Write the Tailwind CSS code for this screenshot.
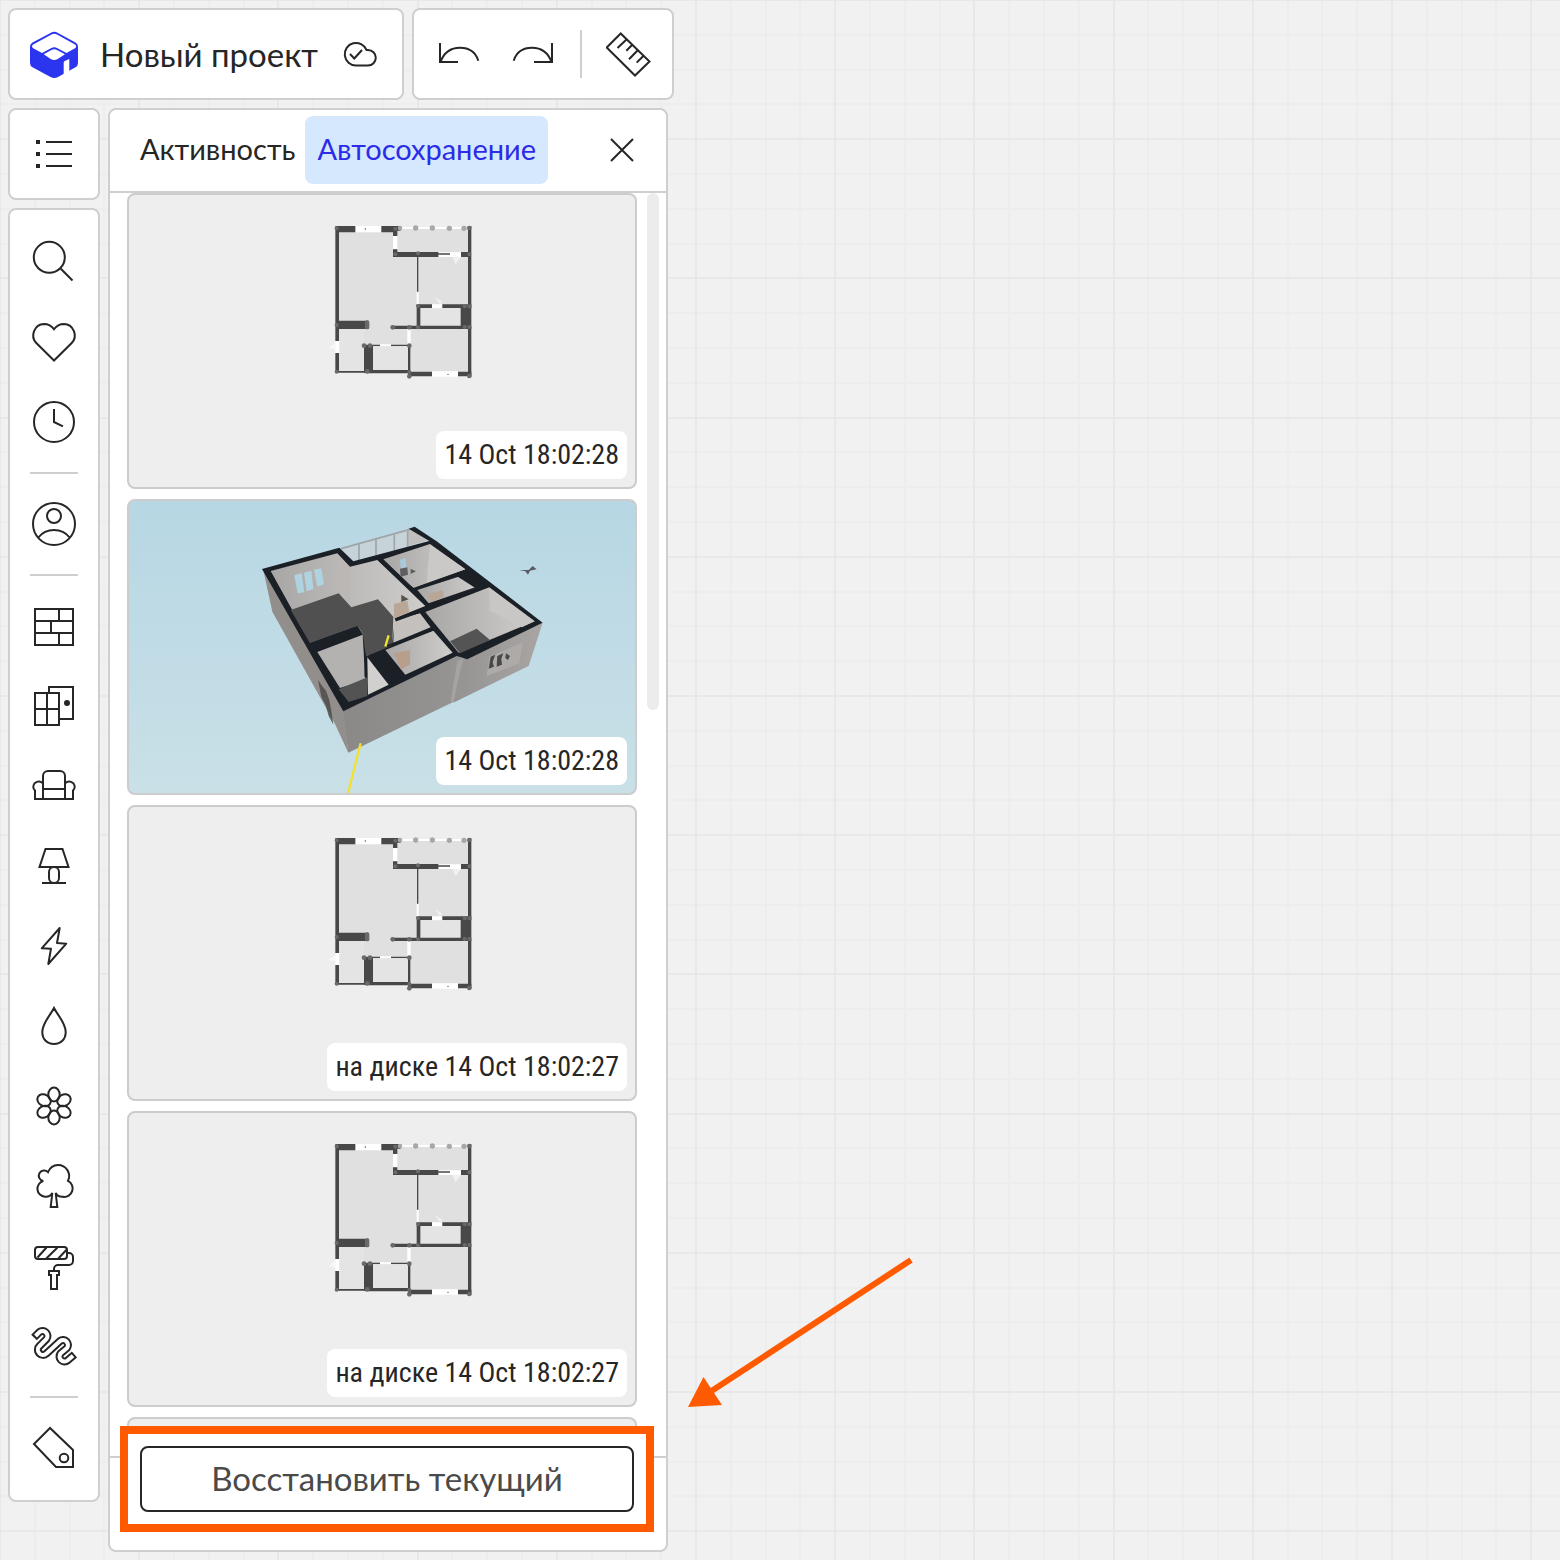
<!DOCTYPE html>
<html lang="ru">
<head>
    <meta charset="UTF-8">
    <meta name="viewport" content="width=device-width, initial-scale=1.0">
    <title>Новый проект</title>
    <script src="https://cdn.jsdelivr.net/npm/@tailwindcss/browser@4"></script>
</head>
<body class="bg-[#f1f1f1] font-['Lato','Open_Sans',sans-serif] text-[#262626] antialiased">
    <!-- Canvas grid -->
    <svg class="fixed inset-0 w-full h-full" aria-hidden="true">
        <defs>
            <pattern id="grid" width="696" height="696" patternUnits="userSpaceOnUse">
                <path stroke="#ededed" stroke-width="2" d="M35 0V696M70 0V696M104 0V696M174 0V696M209 0V696M244 0V696M313 0V696M348 0V696M383 0V696M452 0V696M487 0V696M522 0V696M592 0V696M626 0V696M661 0V696M0 35H696M0 70H696M0 104H696M0 174H696M0 209H696M0 244H696M0 313H696M0 348H696M0 383H696M0 452H696M0 487H696M0 522H696M0 592H696M0 626H696M0 661H696"/>
                <path stroke="#e8e8e8" stroke-width="2" d="M0 0V696M139 0V696M278 0V696M418 0V696M557 0V696M696 0V696M0 0H696M0 139H696M0 278H696M0 418H696M0 557H696M0 696H696"/>
            </pattern>
        </defs>
        <rect width="100%" height="100%" fill="url(#grid)"/>
    </svg>

    <!-- Shared floor plan drawing -->
    <svg class="hidden" aria-hidden="true">
        <symbol id="plan" viewBox="0 0 540 600">
            <path fill="#e0e0e0" d="M80 112H480V548H80z"/>
            <path fill="#e4e4e4" d="M332 355H452V408H332zM190 470H294V540H190zM88 418H162V543H88z"/>
            <g fill="#fff">
                <path d="M136 108H214V127H136zM249 138H262V178H249zM385 187H453V201H385zM272 111H470V117H272zM320 305H326V343H320zM366 343H397V355H366zM292 417H302V467H292zM76 453H88V489H76zM210 463H243V469H210zM366 544H444V560H366z"/>
                <path opacity=".5" d="M428 201h25l-16 22-4-8zM374 322l22 12-6 9zM55 474l20-16v20z"/>
            </g>
            <g fill="#484848">
                <path d="M78 108H136V127H78zM214 108H272V122H262V138H249V127H214zM76 108H87V453H76zM76 489H87V545H76z"/>
                <path d="M249 178H262V186H385V201H249zM385 190H420V194H385zM453 186H484V201H453zM474 108H484V560H474z"/>
                <path d="M321 200H325V305H321zM320 343H366V354H331V407H484V417H245V407H320zM397 343H484V354H397zM452 345H482V417H452z"/>
                <path d="M78 392H174V417H78zM294 465H301V560H294zM160 464H210V468H160zM243 464H300V468H243zM162 467H189V548H162z"/>
                <path d="M80 543H165V548H80zM165 540H300V550H165zM295 545H366V559H295zM444 545H484V559H444z"/>
                <circle cx="166" cy="117" r="2"/><circle cx="414" cy="553" r="2"/>
            </g>
            <g fill="#6a6a6a">
                <circle cx="80" cy="115" r="6"/><circle cx="256" cy="116" r="6"/><circle cx="478" cy="114" r="7"/><circle cx="256" cy="193" r="6"/><circle cx="324" cy="190" r="6"/><circle cx="478" cy="193" r="6"/><circle cx="324" cy="348" r="6"/><circle cx="464" cy="349" r="6"/><circle cx="478" cy="349" r="6"/><circle cx="80" cy="405" r="6"/><rect x="165" y="391" width="13" height="27" rx="5"/><circle cx="248" cy="412" r="7"/><circle cx="298" cy="412" r="7"/><circle cx="324" cy="412" r="6"/><circle cx="464" cy="411" r="6"/><circle cx="478" cy="411" r="6"/><circle cx="162" cy="467" r="7"/><circle cx="180" cy="467" r="7"/><circle cx="298" cy="467" r="7"/><circle cx="80" cy="545" r="6"/><circle cx="172" cy="544" r="7"/><circle cx="298" cy="546" r="6"/><circle cx="298" cy="559" r="7"/><circle cx="478" cy="558" r="7"/>
            </g>
            <g fill="#a8a8a8">
                <circle cx="270" cy="114" r="7"/><circle cx="317" cy="114" r="8"/><circle cx="367" cy="114" r="8"/><circle cx="418" cy="115" r="8"/><circle cx="462" cy="115" r="8"/>
            </g>
        </symbol>
    </svg>

    <div class="relative h-screen flex flex-col gap-2 p-2">
        <header class="flex gap-2 h-[92px] shrink-0">
            <div class="flex items-center w-[396px] pl-5 pr-6 bg-white border-2 border-[#cfcfcf] rounded-lg">
                <svg class="size-12" viewBox="0 0 48 48" fill="#2b35f0">
                    <path d="M20.500 2.900a7.500 7.500 0 0 1 7.500 0L45.500 12.500a5 5 0 0 1 2.500 4.500V33a5 5 0 0 1-2.500 4.300L28 46.900a7.500 7.500 0 0 1-7.500 0L2.500 37.300A5 5 0 0 1 0 33V17a5 5 0 0 1 2.500-4.500z"/>
                    <path fill="#fff" d="M21.500 4.600a5.500 5.500 0 0 1 5.500 0L45 14.600a2 2 0 0 1 0 3.600L36.500 23 27.500 18.200a7 7 0 0 0-6.500 0L12 23 3.200 18.200a2 2 0 0 1 0-3.600z"/>
                    <path fill="#fff" d="M13.700 24.200 21.500 20a6 6 0 0 1 5.500 0l8 4.200-7.300 4.800a7 7 0 0 1-7 0zM33.700 32.700a2 2 0 0 1 1.100-1.800L39.300 28.900V42L33.700 45z"/>
                </svg>
                <h1 class="ml-[22px] text-[33px] leading-10">Новый проект</h1>
                <svg class="size-9 ml-auto" viewBox="0 0 36 36" fill="none" stroke="#262626" stroke-width="2">
                    <path d="M14 29.500A11.300 11.300 0 1 1 24.500 13.900H26a7.800 7.800 0 0 1 0 15.600z"/>
                    <path d="M8 18l4.300 4.500L20 14"/>
                </svg>
            </div>
            <div class="flex items-center gap-6 pl-[22px] pr-[18px] bg-white border-2 border-[#cfcfcf] rounded-lg">
                <button type="button" aria-label="Отменить">
                    <svg class="size-12" viewBox="0 0 48 48" fill="none" stroke="#262626" stroke-width="2"><path d="M4 13V32H22M4.500 32C8 22.500 15 17.800 24 17.800S39.500 22 42.300 30.700"/></svg>
                </button>
                <button type="button" aria-label="Повторить">
                    <svg class="size-12" viewBox="0 0 48 48" fill="none" stroke="#262626" stroke-width="2"><path d="M44 13V32H26M43.500 32C40 22.500 33 17.800 24 17.800S8.500 22 5.700 30.700"/></svg>
                </button>
                <div class="w-[2px] h-12 bg-[#cfcfcf]"></div>
                <button type="button" aria-label="Линейка">
                    <svg class="size-12" viewBox="0 0 48 48" fill="none" stroke="#262626" stroke-width="2"><path d="M14.700 3.500.700 17.500 29 45.500 43.500 31.500zM20.500 9.500l-9 8.500M26.300 14.800l-6 6M31.500 20.500l-8.500 8.700M37.300 26l-6.600 6.600"/></svg>
                </button>
            </div>
        </header>

        <div class="flex gap-2 flex-1 min-h-0">
            <nav class="flex flex-col gap-2 w-[92px]">
                <button type="button" aria-label="Список" class="flex items-center justify-center h-[92px] bg-white border-2 border-[#cfcfcf] rounded-lg">
                    <svg class="size-12" viewBox="0 0 48 48" fill="#262626"><path d="M6 10h4v4H6zM6 22h4v4H6zM6 34h4v4H6zM16 11h26v2H16zM16 23h26v2H16zM16 35h26v2H16z"/></svg>
                </button>
                <div class="flex flex-col items-center py-3 bg-white border-2 border-[#cfcfcf] rounded-lg">
                    <button type="button" aria-label="Поиск" class="flex items-center justify-center size-20">
                        <svg class="size-12" viewBox="0 0 48 48" fill="none" stroke="#262626" stroke-width="2"><circle cx="19.300" cy="19.300" r="15.500"/><path d="M30.800 30.800 42.500 42.500"/></svg>
                    </button>
                    <button type="button" aria-label="Избранное" class="flex items-center justify-center size-20">
                        <svg class="size-12" viewBox="0 0 48 48" fill="none" stroke="#262626" stroke-width="2"><path d="M24 42.500 6.300 25A11.300 11.300 0 0 1 14 6c4 0 7.500 1.700 10 5.300C26.500 7.700 30 6 34 6a11.300 11.300 0 0 1 7.700 19z"/></svg>
                    </button>
                    <button type="button" aria-label="Недавние" class="flex items-center justify-center size-20">
                        <svg class="size-12" viewBox="0 0 48 48" fill="none" stroke="#262626" stroke-width="2"><circle cx="24" cy="24" r="20"/><path d="M24 11V24l9 4.300"/></svg>
                    </button>
                    <div class="w-12 h-[2px] my-[10px] bg-[#cfcfcf]"></div>
                    <button type="button" aria-label="Профиль" class="flex items-center justify-center size-20">
                        <svg class="size-12" viewBox="0 0 48 48" fill="none" stroke="#262626" stroke-width="2"><circle cx="24" cy="24" r="21"/><circle cx="24" cy="16" r="7"/><path d="M8.300 37.500C12 32.800 17.500 30 24 30s12 2.800 15.700 7.500"/></svg>
                    </button>
                    <div class="w-12 h-[2px] my-[10px] bg-[#cfcfcf]"></div>
                    <button type="button" aria-label="Стены" class="flex items-center justify-center size-20">
                        <svg class="size-12" viewBox="0 0 48 48" fill="none" stroke="#262626" stroke-width="2"><path d="M5 7H43V43H5zM5 19H43M5 31H43M29 7V19M21 19V31M29 31V43"/></svg>
                    </button>
                    <button type="button" aria-label="Окна и двери" class="flex items-center justify-center size-20">
                        <svg class="size-12" viewBox="0 0 48 48" fill="none" stroke="#262626" stroke-width="2"><path d="M5 11H29V43H5zM17 11V43M5 27H29M19 11V5H43V37H29"/><circle cx="37" cy="21" r="3" fill="#262626" stroke="none"/></svg>
                    </button>
                    <button type="button" aria-label="Мебель" class="flex items-center justify-center size-20">
                        <svg class="size-12" viewBox="0 0 48 48" fill="none" stroke="#262626" stroke-width="2"><path d="M13 37V14a5 5 0 0 1 5-5H30a5 5 0 0 1 5 5V37M13 27H35M13 21.500C11 19 7.500 19 5 21c-2.300 2-2.300 5.500 0 7.500V37H43V28.500c2.300-2 2.300-5.500 0-7.500-2.500-2-6-2-8 .500"/></svg>
                    </button>
                    <button type="button" aria-label="Освещение" class="flex items-center justify-center size-20">
                        <svg class="size-12" viewBox="0 0 48 48" fill="none" stroke="#262626" stroke-width="2"><path d="M15.500 7H32.500L38.500 25H9.500zM12 41H36"/><rect x="19" y="25" width="10" height="16" rx="5"/></svg>
                    </button>
                    <button type="button" aria-label="Электрика" class="flex items-center justify-center size-20">
                        <svg class="size-12" viewBox="0 0 48 48" fill="none" stroke="#262626" stroke-width="2" stroke-linejoin="round"><path d="M29.700 6 11.700 26.300 21 26.700 18.300 42 36.300 21.700 27 21z"/></svg>
                    </button>
                    <button type="button" aria-label="Сантехника" class="flex items-center justify-center size-20">
                        <svg class="size-12" viewBox="0 0 48 48" fill="none" stroke="#262626" stroke-width="2"><path d="M24 6C20.500 13 12.300 21 12.300 30c0 7.500 5 12 11.700 12s11.700-4.500 11.700-12C35.700 21 27.500 13 24 6z"/></svg>
                    </button>
                    <button type="button" aria-label="Декор" class="flex items-center justify-center size-20">
                        <svg class="size-12" viewBox="0 0 48 48" fill="none" stroke="#262626" stroke-width="2">
                            <ellipse cx="24" cy="12.500" rx="5.700" ry="7"/>
                            <ellipse cx="24" cy="12.500" rx="5.700" ry="7" transform="rotate(60 24 24)"/>
                            <ellipse cx="24" cy="12.500" rx="5.700" ry="7" transform="rotate(120 24 24)"/>
                            <ellipse cx="24" cy="12.500" rx="5.700" ry="7" transform="rotate(180 24 24)"/>
                            <ellipse cx="24" cy="12.500" rx="5.700" ry="7" transform="rotate(240 24 24)"/>
                            <ellipse cx="24" cy="12.500" rx="5.700" ry="7" transform="rotate(300 24 24)"/>
                        </svg>
                    </button>
                    <button type="button" aria-label="Растения" class="flex items-center justify-center size-20">
                        <svg class="size-12" viewBox="0 0 48 48" fill="none" stroke="#262626" stroke-width="2"><path d="M20.700 45 22.300 31C20.500 34 17.500 35 15 34.700A8 8 0 0 1 13.300 19 5.300 5.300 0 1 1 18 10.200C20 5.500 24 3 28 3A11 11 0 0 1 38 18.800 8.500 8.500 0 0 1 33 34.800C30 35 27 33.500 25.700 31L27.300 45z"/></svg>
                    </button>
                    <button type="button" aria-label="Отделка" class="flex items-center justify-center size-20">
                        <svg class="size-12" viewBox="0 0 48 48" fill="none" stroke="#262626" stroke-width="2"><rect x="5" y="5" width="32" height="12" rx="3"/><path d="M7.500 15.500 16.500 5.500M16.300 16.500 27.500 5.500M28.300 16.500 36.300 8M37 11h2a4 4 0 0 1 4 4v4a4 4 0 0 1-4 4H28a4 4 0 0 0-4 4v2M19 29H29V33H27V47H21V33H19z"/></svg>
                    </button>
                    <button type="button" aria-label="Трубы" class="flex items-center justify-center size-20">
                        <svg class="size-12" viewBox="0 0 48 48" fill="none">
                            <path stroke="#262626" stroke-width="8" d="M4 15.500 9.500 10A5 5 0 0 1 16.500 17L9.500 24A5 5 0 0 0 16.500 31.500L30 19A5 5 0 0 1 37 26L30.500 31.500A5 5 0 0 0 37.500 38.500L44.500 32.500"/>
                            <path stroke="#fff" stroke-width="4" d="M5.500 14 9.500 10A5 5 0 0 1 16.500 17L9.500 24A5 5 0 0 0 16.500 31.500L30 19A5 5 0 0 1 37 26L30.500 31.500A5 5 0 0 0 37.500 38.500L43 33.800"/>
                        </svg>
                    </button>
                    <div class="w-12 h-[2px] my-[10px] bg-[#cfcfcf]"></div>
                    <button type="button" aria-label="Бренды" class="flex items-center justify-center size-20">
                        <svg class="size-12" viewBox="0 0 48 48" fill="none" stroke="#262626" stroke-width="2"><path d="M20 4 4 20 26 43H43V26z"/><circle cx="34" cy="34" r="4.300"/></svg>
                    </button>
                </div>
            </nav>

            <aside class="flex flex-col w-[560px] bg-white border-2 border-[#cfcfcf] rounded-lg">
                <div class="flex items-center h-[83px] shrink-0 px-5 pb-[1px] border-b-2 border-[#cfcfcf] text-[29px]">
                    <button type="button" class="h-[68px] px-[10px] pb-[2px] rounded-lg">Активность</button>
                    <button type="button" class="h-[68px] px-3 pb-[2px] rounded-lg bg-[#d5e8fd] text-[#2b2be8]">Автосохранение</button>
                    <button type="button" aria-label="Закрыть" class="ml-auto">
                        <svg class="size-12" viewBox="0 0 48 48" stroke="#262626" stroke-width="2"><path d="M13 13 35 35M35 13 13 35"/></svg>
                    </button>
                </div>

                <div class="flex gap-[10px] flex-1 min-h-0 overflow-hidden pl-[17px] pr-[7px]">
                    <ul class="flex flex-col flex-1 gap-[10px] font-['Roboto_Condensed','Roboto',sans-serif] text-[28px] leading-9">
                        <li class="relative h-[296px] shrink-0 bg-[#eeeeee] border-2 border-[#cccccc] rounded-lg overflow-hidden">
                            <svg class="w-full h-full" viewBox="0 0 506 292"><use href="#plan" x="181" y="-5" width="180" height="200"/></svg>
                            <span class="absolute right-2 bottom-2 px-2 py-[6px] bg-white rounded-lg">14 Oct 18:02:28</span>
                        </li>
                        <li class="relative h-[296px] shrink-0 bg-linear-to-b from-[#b7d7e4] to-[#c9e0e7] border-2 border-[#cccccc] rounded-lg overflow-hidden">
                            <svg class="w-full h-full" viewBox="0 0 506 292">
                                <defs>
                                    <linearGradient id="front" x1="0" x2="1"><stop offset="0" stop-color="#8a8988"/><stop offset="1" stop-color="#979594"/></linearGradient>
                                    <linearGradient id="side" x1="0" x2="1"><stop offset="0" stop-color="#959392"/><stop offset="1" stop-color="#a8a5a3"/></linearGradient>
                                    <linearGradient id="wall" x1="0" x2="1"><stop offset="0" stop-color="#a9a7a5"/><stop offset="1" stop-color="#cfcdcb"/></linearGradient>
                                </defs>
                                <g transform="translate(111 -1) scale(.3333)">
                                    <path fill="#918e8c" d="M70 210 310 630 325 758 285 672 97 335z"/>
                                    <path fill="url(#front)" d="M308 628 650 465 672 478 640 606 325 758z"/>
                                    <path fill="url(#side)" d="M668 474 908 368 866 498 640 608z"/>
                                    <path fill="#a5a3a1" d="M652 482l18-6-30 130-8-2z"/>
                                    <path fill="#aeaaa8" d="M748 470l100-42-10 62-98 38z"/>
                                    <path fill="#48484a" d="M752 470l14-6-8 22 4 14-16 6zM772 468l18-8-6 16 2 18-16 6zM798 460l12 8-6 12-8-6z"/>
                                    <path fill="#4a4847" d="M234 540l14 20 10 12 10 28 6 32 6 42-14-26-8-30-14-28z" opacity=".8"/>
                                    <!-- balcony -->
                                    <path fill="#c6d4d9" d="M303 146 515 84 565 124 338 186z"/>
                                    <path fill="#c2c0bf" d="M503 92 518 88 562 122 502 138z"/>
                                    <path fill="none" stroke="#9fa5a8" stroke-width="5" d="M303 146 510 88M357 134V180M408 119V166M463 105V152M503 94V140"/>
                                    <path fill="#1b1f26" d="M66 207 298 143 340 184 568 123 506 86 524 80 590 124 908 368 682 478 650 468 310 634z"/>
                                    <!-- rooms -->
                                    <path fill="url(#wall)" d="M92 213 292 160 330 200 412 180 556 318 466 354 456 432 385 462 370 405 352 378 210 426z"/>
                                    <path fill="#bab7b5" d="M290 162l38 38V318l-36-40z"/>
                                    <path fill="#505050" d="M152 330 296 280 334 322 414 298 460 350 457 436 378 470 368 400 352 378 210 430z"/>
                                    <path fill="#afd3e0" d="M163 226l22-7 8 58-20 3zM192 218l22-6 6 55-20 7zM222 209l22-4 8 48-20 7z"/>
                                    <path fill="url(#wall)" d="M430 178 570 132 676 208 520 264z"/>
                                    <path fill="#cbc9c7" d="M570 134 676 208 560 248z"/>
                                    <path fill="#a7cbdc" d="M480 180l16-6 4 32-16 12z"/>
                                    <path fill="#5e5e61" d="M480 206l22-4 2 22-22 6zM512 206l16 8-16 8z"/>
                                    <path fill="#b8a797" d="M462 312l40-10 6 34-46 20z"/>
                                    <path fill="#54504e" d="M484 284l22 14-22 8z"/>
                                    <path fill="url(#wall)" d="M532 270 674 224 710 260 566 310z"/>
                                    <path fill="#b9a697" d="M562 282l46-12 4 22-40 14z"/>
                                    <path fill="url(#wall)" d="M556 336 748 262 884 364 656 458z"/>
                                    <path fill="#c9c7c6" d="M748 264 884 364 846 382 750 332z"/>
                                    <path fill="#555454" d="M630 424 710 386 750 420 660 460z"/>
                                    <path fill="#c3c0be" d="M462 360 540 340 572 382 460 428z"/>
                                    <path fill="url(#wall)" d="M436 450 580 392 638 458 496 524z"/>
                                    <path fill="#b89f8b" d="M462 460l48-10v44l-28 14z"/>
                                    <path fill="#b4b2b0" d="M232 456 368 404 376 540 300 564z"/>
                                    <path fill="#535353" d="M296 568 382 532V588L326 606z"/>
                                    <path fill="#d2d0ce" d="M382 472 446 554 384 584z"/>
                                    <g fill="none" stroke="#1b1f26" stroke-width="9">
                                        <path d="M418 178 568 318M466 360 660 290M512 262 542 290"/>
                                        <path stroke-width="5" d="M436 440 584 388M376 466V530"/>
                                    </g>
                                    <path fill="#1b1f26" d="M676 210 738 256 712 268 650 228zM386 466 430 450 496 528 452 552zM210 430 352 378 366 402 222 456z"/>
                                    <path fill="none" stroke="#f0e22e" stroke-width="7" d="M362 730 324 880M446 406 436 440"/>
                                    <path fill="#5d5a66" d="M838 210l28 0 12-12 12 10-20 4-6 12-8-10z"/>
                                </g>
                            </svg>
                            <span class="absolute right-2 bottom-2 px-2 py-[6px] bg-white rounded-lg">14 Oct 18:02:28</span>
                        </li>
                        <li class="relative h-[296px] shrink-0 bg-[#eeeeee] border-2 border-[#cccccc] rounded-lg overflow-hidden">
                            <svg class="w-full h-full" viewBox="0 0 506 292"><use href="#plan" x="181" y="-5" width="180" height="200"/></svg>
                            <span class="absolute right-2 bottom-2 px-2 py-[6px] bg-white rounded-lg">на диске 14 Oct 18:02:27</span>
                        </li>
                        <li class="relative h-[296px] shrink-0 bg-[#eeeeee] border-2 border-[#cccccc] rounded-lg overflow-hidden">
                            <svg class="w-full h-full" viewBox="0 0 506 292"><use href="#plan" x="181" y="-5" width="180" height="200"/></svg>
                            <span class="absolute right-2 bottom-2 px-2 py-[6px] bg-white rounded-lg">на диске 14 Oct 18:02:27</span>
                        </li>
                        <li class="h-[296px] shrink-0 bg-[#eeeeee] border-2 border-[#cccccc] rounded-lg"></li>
                    </ul>
                    <div class="w-3 h-[517px] bg-[#ececec] rounded-full"></div>
                </div>

                <div class="relative shrink-0 pb-[18px] border-t-2 border-[#cfcfcf]">
                    <div class="-mt-8 ml-[10px] mr-3 p-3 bg-white border-8 border-[#ff5a00]">
                        <button type="button" class="w-full h-[66px] border-2 border-[#262626] rounded-lg text-[33px] text-[#4a4a4a]">Восстановить текущий</button>
                    </div>
                </div>
            </aside>
        </div>

        <!-- Pointer to the restore button -->
        <svg class="absolute left-[684px] top-[1250px] w-[232px] h-[160px]" viewBox="0 0 232 160" fill="#ff5a00" aria-hidden="true">
            <path stroke="#ff5a00" stroke-width="6" d="M227 10 26 142"/>
            <path d="M19.500 127 4 157 38 155z"/>
        </svg>
    </div>
</body>
</html>
